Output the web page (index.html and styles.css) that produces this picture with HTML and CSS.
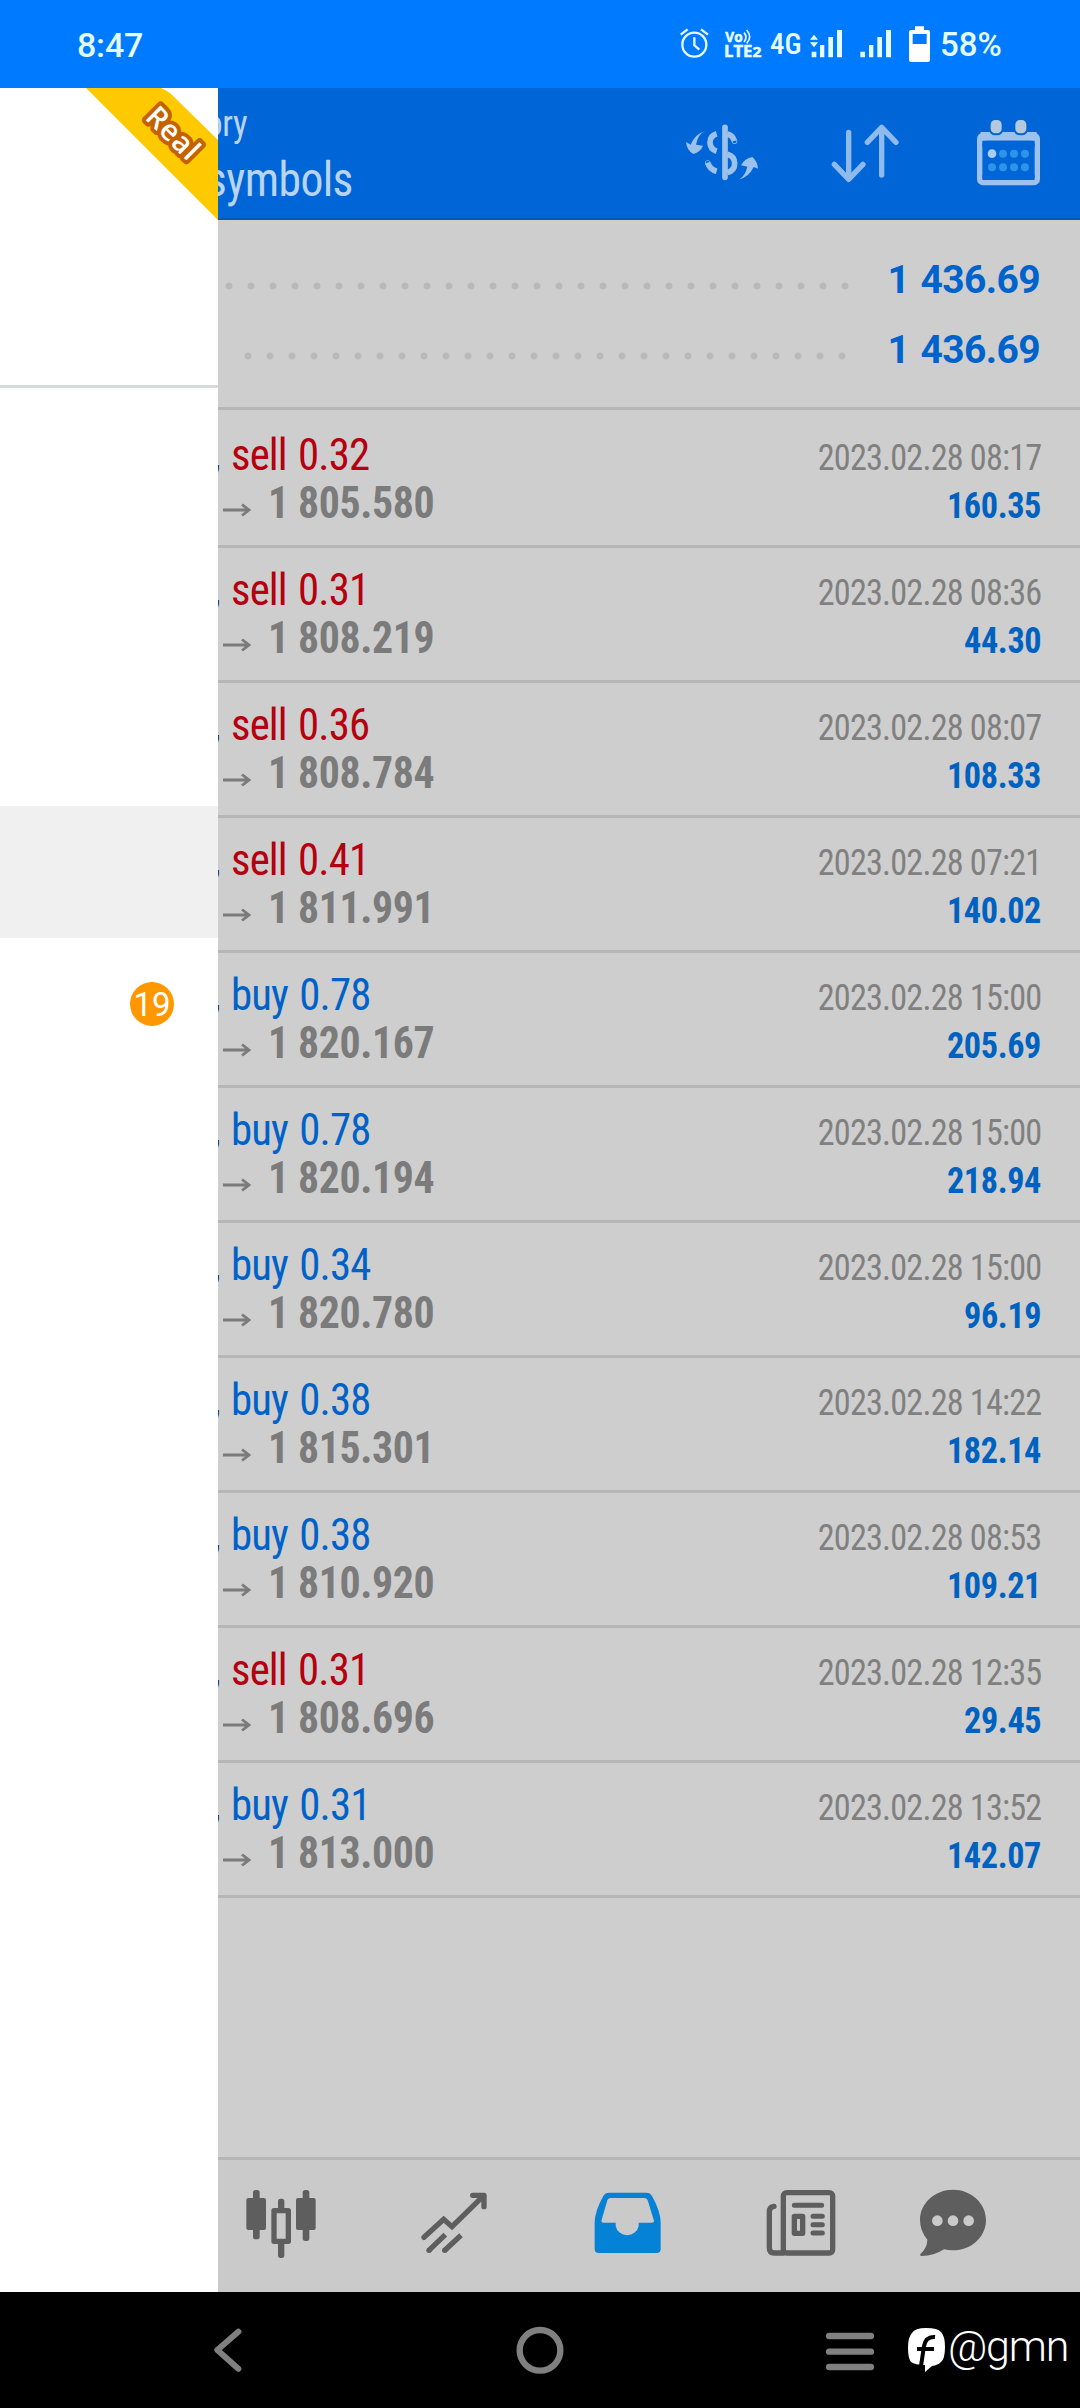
FILE: index.html
```html
<!DOCTYPE html>
<html lang="en">
<head>
<meta charset="utf-8">
<title>History</title>
<link rel="stylesheet" href="styles.css">
</head>
<body>
<div class="screen">
  <div class="status">
    <span class="clock">8:47</span>
    <svg class="st alarm" viewBox="117 72 93 120"><g fill="none" stroke="#e4fcff" stroke-width="7"><circle cx="163" cy="134" r="36"/><path d="M163 112v24l15 13M122 104l21-16M204 104l-21-16"/></g></svg>
    <svg class="st volte" viewBox="249 72 117 120"><g fill="#e4fcff" stroke="#e4fcff" stroke-width="1.5" font-family="Open Sans, sans-serif" font-weight="700"><text x="256" y="127" font-size="41" textLength="52" lengthAdjust="spacingAndGlyphs">Vo</text><text x="252" y="172" font-size="47" textLength="112" lengthAdjust="spacingAndGlyphs">LTE<tspan font-size="44">2</tspan></text></g><path d="M312 98q12 14 0 28M320 90q18 21 0 40" fill="none" stroke="#e4fcff" stroke-width="5"/></svg>
    <span class="net">4G</span>
    <svg class="st sig1" viewBox="507 72 102 120" fill="#e4fcff"><path d="M522 104l12 15h-24zM522 142l12-15h-24zM515 155h14v17h-14zM540 135h13v37h-13zM565 111h14v61h-14zM591 90h15v82h-15z"/></svg>
    <svg class="st sig2" viewBox="657 72 99 120" fill="#e4fcff"><path d="M661 155h14v17h-14zM687 135h13v37h-13zM712 111h14v61h-14zM738 90h15v82h-15z"/></svg>
    <svg class="st batt" viewBox="804 72 69 120"><path fill="#fff" fill-rule="evenodd" d="M825 79h27v11h12q6 0 6 6v84q0 6-6 6h-51q-6 0-6-6V96q0-6 6-6h12zM818 102v30h42v-30z"/></svg>
    <span class="pct">58%</span>
  </div>

  <div class="app">
    <header class="bar">
      <div class="titles">
        <div class="title"><span>History</span></div>
        <div class="sub"><span>All symbols</span></div>
      </div>
      <svg class="ic cur" viewBox="132 354 228 210"><g fill="none" stroke="#9cc1ea" stroke-width="17"><path d="M255 382v150" stroke-linecap="round"/><path d="M230 401q-20 6-20 26 0 21 20 27M262 402q17 5 21 21M262 463q22 6 22 28 0 20-22 27" /><path d="M203 488q6 20 27 26"/><circle cx="284" cy="424" r="1" stroke-width="14"/><circle cx="203" cy="488" r="1" stroke-width="13"/></g><g fill="#9cc1ea"><path d="M195 393q-20 8-27 41l21 3q-7 18-29 25-20-12-22-36l14 8q13-32 43-41z"/><path d="M298 538q18-11 24-38l-19-4q11-21 34-25 15 12 17 35l-13-5q-13 29-43 37z"/></g></svg>
      <svg class="ic sort" viewBox="567 354 216 210"><path d="M626 397v140M583 493l43 45 43-45M725 525V385M682 427l43-45 43 45" fill="none" stroke="#8fbaec" stroke-width="16" stroke-linecap="round" stroke-linejoin="round"/></svg>
      <svg class="ic cal" viewBox="1005 354 201 210"><rect x="1019" y="406" width="173" height="142" rx="10" fill="none" stroke="#9dc2ed" stroke-width="16"/><path d="M1022 396h168v26h-168z" fill="#9dc2ed"/><path d="M1027 440v-5q0-13 13-13h131q13 0 13 13v5zM1027 526v2q0 12 13 12h131q13 0 13-12v-2z" fill="#0066d8"/><g fill="#b3c9e0" stroke="#0066d8" stroke-width="6"><rect x="1049" y="357" width="39" height="46" rx="17"/><rect x="1123" y="357" width="39" height="46" rx="17"/></g><g fill="#2d94e8"><circle cx="1056" cy="461" r="13" fill="#a9cdf0"/><circle cx="1089" cy="461" r="12"/><circle cx="1122" cy="461" r="12"/><circle cx="1155" cy="461" r="12"/><circle cx="1056" cy="502" r="12"/><circle cx="1089" cy="502" r="12"/><circle cx="1122" cy="502" r="12"/><circle cx="1155" cy="502" r="12"/></g></svg>
    </header>

    <section class="summary">
      <div class="sumrow"><i class="dots d1"></i><b>1 436.69</b></div>
      <div class="sumrow"><i class="dots d2"></i><b>1 436.69</b></div>
    </section>

    <main class="list" id="list"></main>

    <nav class="tabs">
      <svg viewBox="135 144 216 216"><g fill="#5e5e5e"><rect x="139" y="174" width="59" height="96" rx="6"/><rect x="159" y="150" width="20" height="148" rx="8"/><rect x="288" y="174" width="59" height="96" rx="6"/><rect x="308" y="150" width="20" height="153" rx="8"/><rect x="234" y="176" width="19" height="40" rx="8"/><rect x="234" y="300" width="19" height="54" rx="8"/></g><rect x="222" y="212" width="43" height="92" fill="none" stroke="#5e5e5e" stroke-width="16" stroke-linejoin="round"/></svg>
      <svg viewBox="654 144 216 216"><path d="M672 292l59-54 25 22 92-90" fill="none" stroke="#5e5e5e" stroke-width="16" stroke-linecap="round"/><path d="M818 166h34v34" fill="none" stroke="#5e5e5e" stroke-width="16" stroke-linecap="round" stroke-linejoin="round"/><path d="M686 332l50-48M733 332l50-46" fill="none" stroke="#5e5e5e" stroke-width="16"/><circle cx="687" cy="331" r="8" fill="#5e5e5e"/><circle cx="734" cy="331" r="8" fill="#5e5e5e"/></svg>
      <svg viewBox="1173 144 216 216"><path fill="#0581d6" fill-rule="evenodd" d="M1227 158h112q12 0 17 10 26 46 26 80v79q0 12-12 12h-174q-12 0-12-12v-79q0-34 26-80 5-10 17-10zM1232 174q-7 0-10 7l-17 58q-3 9 6 9h36v10a35 33 0 0 0 69 0v-10h39q9 0 6-9l-18-58q-3-7-10-7z"/></svg>
      <svg viewBox="372 144 216 216"><g fill="none" stroke="#5e5e5e" stroke-width="16" stroke-linejoin="round"><rect x="430" y="158" width="148" height="181" rx="10"/><path d="M402 199q-14 2-14 16v109q0 15 15 15h27" stroke-linecap="round"/><path d="M463 196h82M519 229h28M519 254h28M519 279h28" stroke-linecap="round" stroke-width="15"/><rect x="463" y="229" width="25" height="51"/></g></svg>
      <svg class="chat" viewBox="831 144 216 216"><path fill="#5e5e5e" d="M939 149c55 0 99 41 99 91s-44 91-99 91q-15 0-27-3-30 20-67 20-7-2-3-7 20-18 20-42-22-26-22-59c0-50 44-91 99-91z"/><g fill="#cacaca"><circle cx="892" cy="242" r="16"/><circle cx="939" cy="242" r="16"/><circle cx="986" cy="242" r="16"/></g></svg>
    </nav>

    <aside class="drawer">
      <div class="account"></div>
      <div class="menu"></div>
      <div class="selected"></div>
      <div class="mail"><span class="badge">19</span></div>
      <svg class="ribbon" viewBox="86 88 132 132"><path fill="#ffc900" d="M86 88h75q5 2 9 5l48 47v80z"/><text x="173" y="133" transform="rotate(45 173 133)" text-anchor="middle" dy="10" textLength="62" class="real">Real</text></svg>
    </aside>
  </div>

  <div class="sysnav">
    <svg class="back" viewBox="33 558 108 144"><path d="M115 575L52 630l63 56" fill="none" stroke="#808080" stroke-width="18" stroke-linecap="round" stroke-linejoin="round"/></svg>
    <svg class="home" viewBox="949 558 144 144"><circle cx="1021" cy="631" r="61" fill="none" stroke="#808080" stroke-width="19"/></svg>
    <svg class="recent" viewBox="558 558 144 144"><path d="M567 588h126M567 635h126M567 681h126" stroke="#808080" stroke-width="19" stroke-linecap="round"/></svg>
    <svg class="mark" viewBox="0 0 48 50"><path fill="#fff" d="M20 4q12 0 15 4 4 4 4 15 0 12-4 15-3 3-9 4l-7 6v-7q-10 0-14-3-3-4-3-14 0-11 4-15Q9 4 20 4z"/><path d="M29 13q-9-1-11 9l-3 20M11 25h17" fill="none" stroke="#000" stroke-width="4"/></svg>
    <span class="handle">@gmn</span>
  </div>
</div>
<script src="app.js"></script>
</body>
</html>
```

FILE: styles.css
```css
* { box-sizing: border-box; }
body { margin: 0; background: #000; font-family: "Roboto Condensed", Roboto, sans-serif; }
.screen { width: 1080px; height: 2408px; display: flex; flex-direction: column; overflow: hidden; }
svg { display: block; flex: none; }

.status { height: 88px; flex: none; background: #007bff; display: flex; align-items: flex-start; padding: 24px 0 0 77px; color: #e4fcff; font-family: Roboto, sans-serif; }
.st { height: 40px; }
.clock { width: 602px; font-size: 34px; font-weight: 500; line-height: 42px; letter-spacing: -.2px; }
.alarm { width: 31px; }
.volte { width: 39px; margin-left: 13px; }
.net { width: 39px; margin-left: 8px; font-size: 29px; line-height: 41px; font-stretch: 75%; font-weight: 500; }
.sig1 { width: 34px; }
.sig2 { width: 33px; margin-left: 16px; }
.batt { width: 23px; margin-left: 16px; }
.pct { margin-left: 9px; font-size: 33px; line-height: 42px; font-weight: 500; }

.app { position: relative; height: 2204px; flex: none; background: #cecece; display: flex; flex-direction: column; }
.bar { height: 132px; flex: none; background: #0066d8; border-bottom: 2px solid #0a57ad; display: flex; align-items: flex-start; padding: 30px 38px 0 0; color: #b9d4ee; }
.ic { height: 70px; }
.titles { width: 684px; margin-top: -30px; font-stretch: 75%; }
.titles span { transform: scaleX(.95); transform-origin: right; }
.title { width: 247px; display: flex; justify-content: flex-end; font-size: 37px; line-height: 44px; margin-top: 14px; letter-spacing: -.3px; }
.sub { width: 353px; display: flex; justify-content: flex-end; font-size: 48px; line-height: 56px; margin-top: 6px; letter-spacing: -.6px; }
.cur { width: 76px; }
.sort { width: 72px; margin-left: 69px; }
.cal { width: 67px; margin-left: 74px; }

.summary { height: 190px; flex: none; border-bottom: 3px solid #b6b6b6; padding: 25px 40px 0 218px; }
.sumrow { height: 70px; display: flex; align-items: center; justify-content: space-between; }
.sumrow b { font: 700 39px/70px Roboto, sans-serif; letter-spacing: -.6px; word-spacing: 2px; color: #0063cb; }
.dots { height: 8px; margin-top: 12px; background: radial-gradient(circle, #b9b9b9 3px, transparent 4px) 0 0 / 22px 8px repeat-x; }
.d1 { width: 638px; }
.d2 { width: 616px; margin-left: 19px; }

.list { flex: 1; padding-top: 3px; }
.deal { height: 135px; border-bottom: 3px solid #b6b6b6; display: flex; justify-content: space-between; padding: 17px 39px 0 212px; font-stretch: 75%; }
.line { display: flex; height: 48px; align-items: center; white-space: nowrap; }
.deal .type { font-size: 45px; font-weight: 430; letter-spacing: -.9px; word-spacing: 2.5px; transform: scaleX(.95); transform-origin: left; }
.comma { width: 19px; color: #222; font-size: 45px; }
.sell { color: #b4000f; }
.buy { color: #0062c8; }
.price { font-size: 44px; font-weight: 700; color: #7b7b7b; letter-spacing: -.4px; margin-top: 2px; transform: scaleX(.95); transform-origin: left; }
.arrow { width: 28px; height: 14px; margin: 16px 17px 0 11px; }
.right { padding-top: 4px; }
.right .line { justify-content: flex-end; }
.right span { transform: scaleX(.95); transform-origin: right; }
.date { font-size: 36px; color: #808080; letter-spacing: -.85px; }
.profit { font-size: 36px; font-weight: 700; color: #0062c0; letter-spacing: -.4px; }

.tabs { height: 135px; flex: none; background: #cacaca; border-top: 3px solid #b6b6b6; display: flex; gap: 101px; padding: 28px 0 0 245px; }
.tabs svg { width: 72px; height: 72px; }
.tabs .chat { margin-left: -20px; }

.drawer { position: absolute; left: 0; top: 0; width: 218px; height: 100%; background: #fff; overflow: hidden; }
.account { height: 300px; border-bottom: 3px solid #d8dada; }
.menu { height: 418px; }
.selected { height: 132px; background: #f0f0f0; }
.mail { height: 132px; display: flex; align-items: center; justify-content: flex-end; padding-right: 44px; }
.badge { width: 44px; height: 44px; border-radius: 22px; background: #ff9800; color: #fff; font: 400 33px/46px Roboto, sans-serif; text-align: center; }
.ribbon { position: absolute; right: 0; top: 0; width: 132px; height: 132px; }
.real { font: 600 29px "Open Sans", sans-serif; fill: #fff; stroke: #c46200; stroke-width: 8px; stroke-linejoin: round; paint-order: stroke; }

.sysnav { flex: 1; background: #000; display: flex; padding: 34px 0 0 211px; }
.sysnav svg { height: 48px; }
.back { width: 36px; }
.home { width: 48px; margin-left: 269px; }
.recent { width: 48px; margin-left: 262px; }
.sysnav .mark { width: 48px; height: 50px; margin: -2px 0 0 32px; }
.handle { margin: -10px 0 0 -6px; font: 350 43px/60px Roboto, sans-serif; letter-spacing: -1.2px; color: #fff; }
```

FILE: app.js
```js
const deals = [
  ["sell", "0.32", "1 805.580", "2023.02.28 08:17", "160.35"],
  ["sell", "0.31", "1 808.219", "2023.02.28 08:36", "44.30"],
  ["sell", "0.36", "1 808.784", "2023.02.28 08:07", "108.33"],
  ["sell", "0.41", "1 811.991", "2023.02.28 07:21", "140.02"],
  ["buy", "0.78", "1 820.167", "2023.02.28 15:00", "205.69"],
  ["buy", "0.78", "1 820.194", "2023.02.28 15:00", "218.94"],
  ["buy", "0.34", "1 820.780", "2023.02.28 15:00", "96.19"],
  ["buy", "0.38", "1 815.301", "2023.02.28 14:22", "182.14"],
  ["buy", "0.38", "1 810.920", "2023.02.28 08:53", "109.21"],
  ["sell", "0.31", "1 808.696", "2023.02.28 12:35", "29.45"],
  ["buy", "0.31", "1 813.000", "2023.02.28 13:52", "142.07"]
];
document.getElementById("list").innerHTML = deals.map(([side, lot, price, date, profit]) => `
  <div class="deal">
    <div>
      <div class="line"><span class="comma">,</span><span class="type ${side}">${side} ${lot}</span></div>
      <div class="line"><svg class="arrow" viewBox="0 0 28 14"><path d="M0 7h26M19 1.5l7 5.5-7 5.5" fill="none" stroke="#7b7b7b" stroke-width="2.8"/></svg><span class="price">${price}</span></div>
    </div>
    <div class="right">
      <div class="line"><span class="date">${date}</span></div>
      <div class="line"><span class="profit">${profit}</span></div>
    </div>
  </div>`).join("");
```
